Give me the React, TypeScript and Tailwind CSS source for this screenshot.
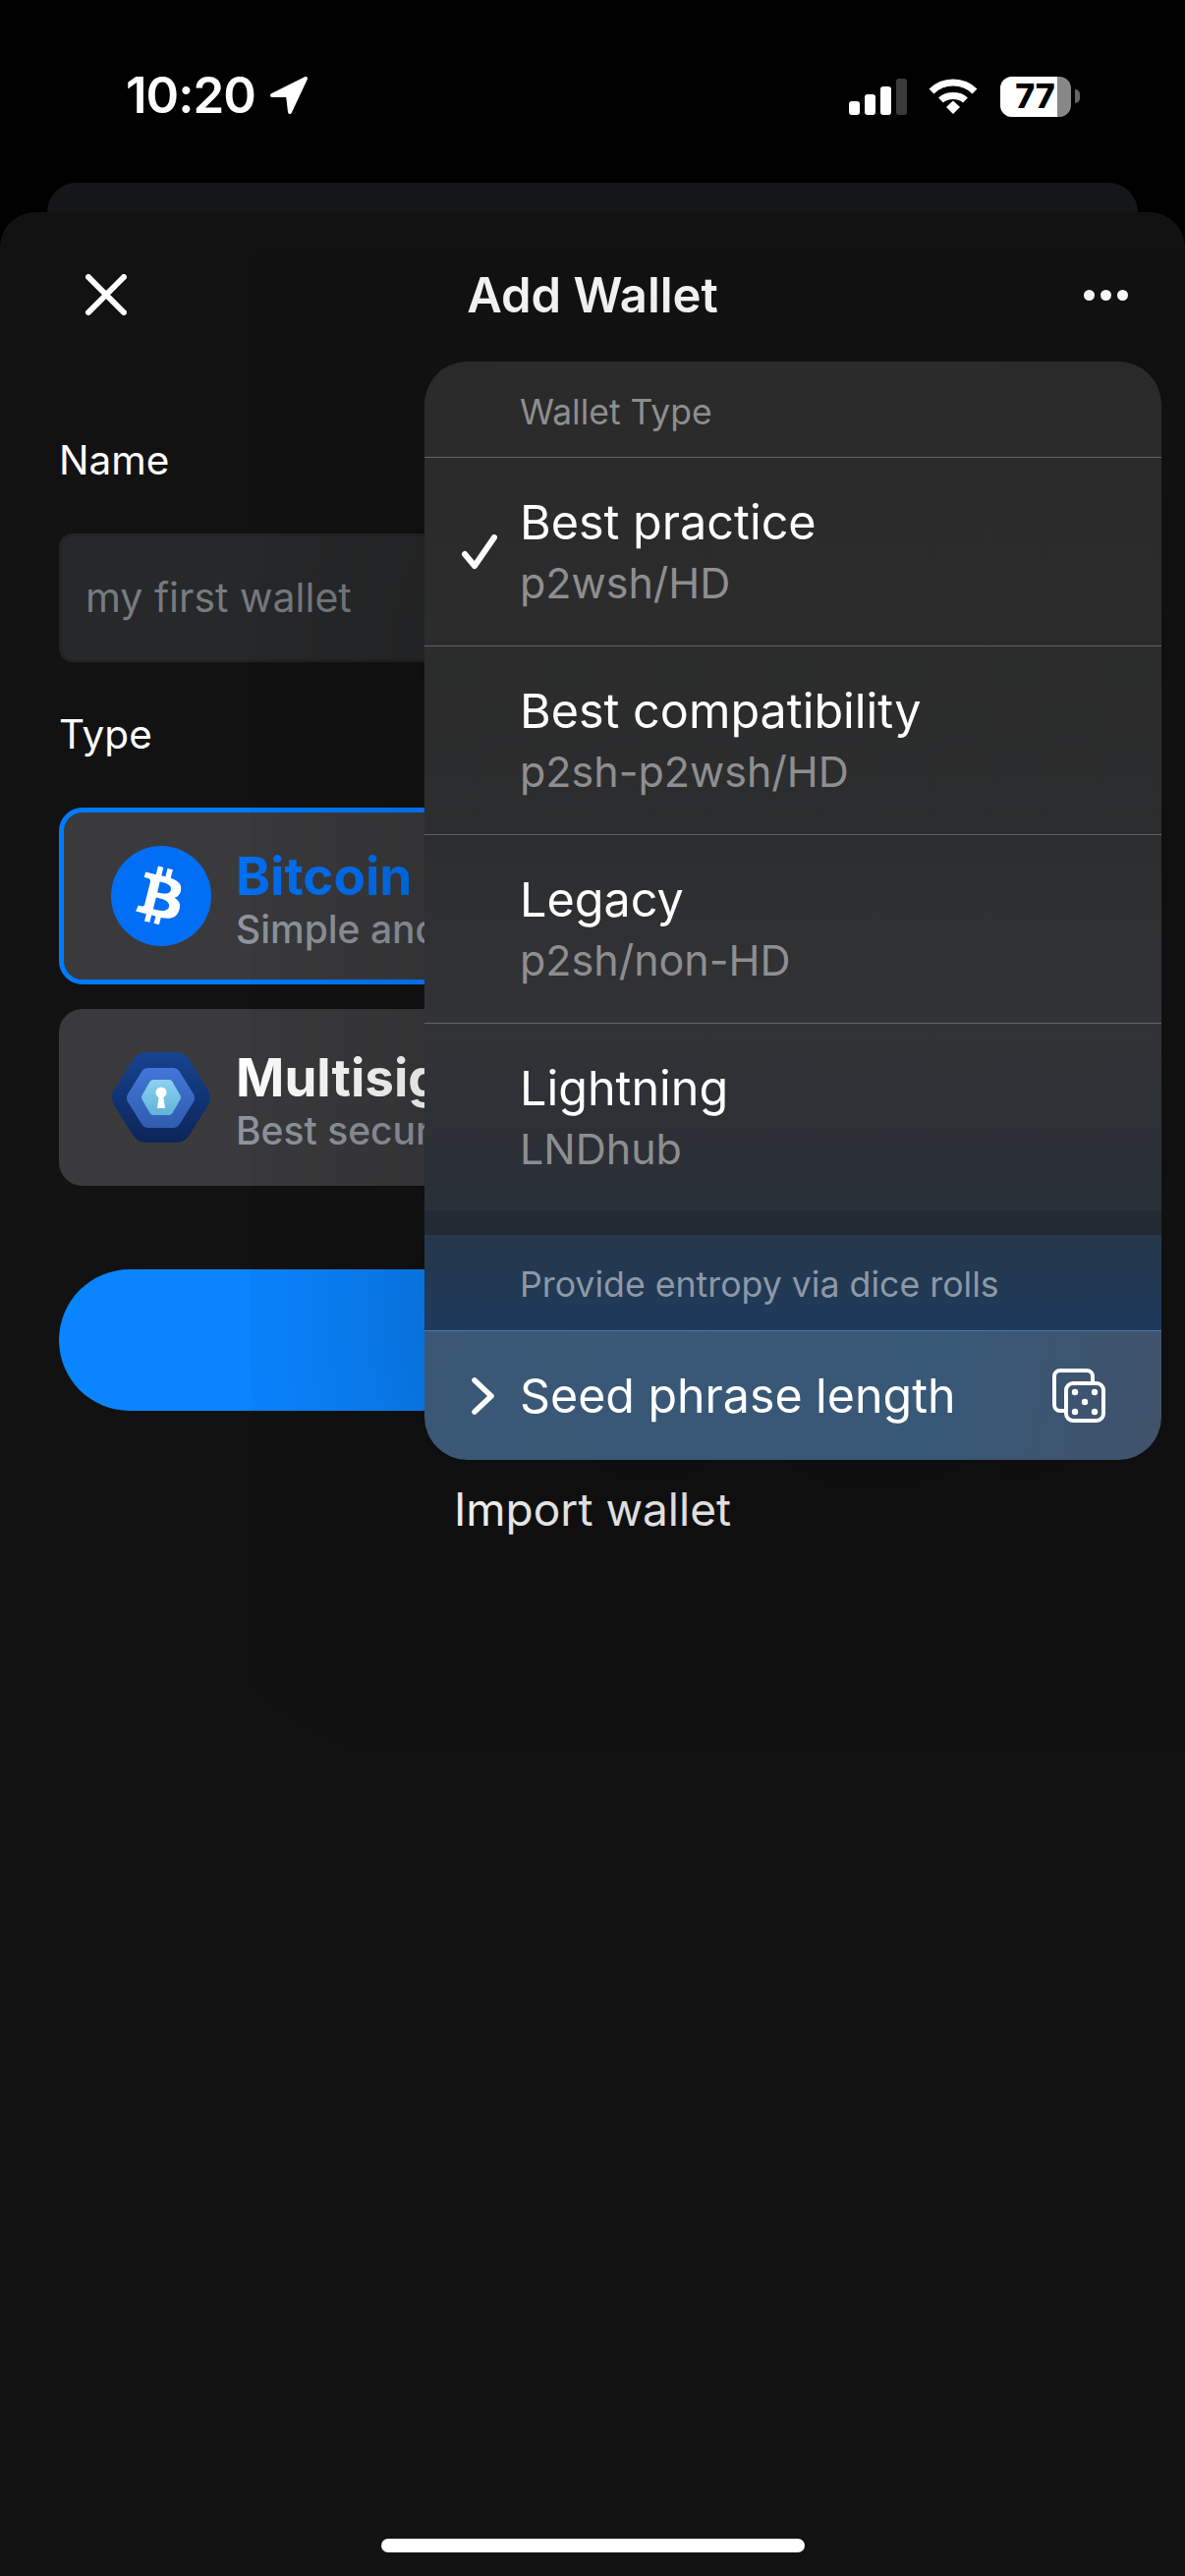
import React from 'react';
import { FaBtc } from 'react-icons/fa';

const walletTypes = [
  { title: 'Best practice', sub: 'p2wsh/HD', checked: true },
  { title: 'Best compatibility', sub: 'p2sh-p2wsh/HD' },
  { title: 'Legacy', sub: 'p2sh/non-HD' },
  { title: 'Lightning', sub: 'LNDhub' },
];

const StatusBar = () => (
  <div className="h-[186px] flex items-start justify-between pt-[72px] pl-[128px] pr-[107px] text-white">
    <div className="flex items-center gap-[14px] h-[50px]">
      <span className="text-[51px] leading-[50px] font-semibold tracking-[-1px]">10:20</span>
      <svg width="40" height="40" viewBox="0 0 40 40" className="fill-white stroke-white">
        <path d="M3 20 L37 3 L21 37 L19 20 Z" strokeWidth="4" strokeLinejoin="round" />
      </svg>
    </div>
    <div className="flex items-center h-[50px] pt-[2px]">
      <div className="flex items-end gap-[5px] h-[37px]">
        <div className="w-[11px] h-[14px] rounded-[3px] bg-white" />
        <div className="w-[11px] h-[21px] rounded-[3px] bg-white" />
        <div className="w-[11px] h-[29px] rounded-[3px] bg-white" />
        <div className="w-[11px] h-[37px] rounded-[3px] bg-[#3a3a3a]" />
      </div>
      <svg width="50" height="37" viewBox="0 0 50 37" className="ml-[22px]" fill="none" stroke="white">
        <path d="M3 13 C15 1 35 1 47 13" strokeWidth="7" />
        <path d="M12.5 22 C19 16 31 16 37.5 22" strokeWidth="7" />
        <path d="M18 29 L25 22.5 L32 29 L25 36 Z" fill="white" strokeWidth="0" />
      </svg>
      <div className="ml-[23px] w-[72px] h-[41px] rounded-[12px] overflow-hidden bg-[#888888] flex">
        <div className="w-[58px] bg-white flex items-center justify-center text-black text-[34px] font-extrabold leading-none pl-[13px]">
          77
        </div>
      </div>
      <div className="ml-[4px] w-[5px] h-[14px] rounded-r-[5px] bg-[#666666]" />
    </div>
  </div>
);

const BitcoinIcon = () => (
  <div className="w-[102px] h-[102px] rounded-full bg-[#006ff5] flex items-center justify-center shrink-0 text-white">
    <FaBtc size={58} className="rotate-[14deg]" />
  </div>
);

const MultisigIcon = () => (
  <svg width="102" height="94" viewBox="0 0 102 94" className="shrink-0">
    <defs>
      <linearGradient id="hexOuter" gradientUnits="userSpaceOnUse" x1="0" y1="1" x2="0" y2="93">
        <stop offset="0" stopColor="#174491" />
        <stop offset="1" stopColor="#0b2458" />
      </linearGradient>
      <linearGradient id="hexMid" gradientUnits="userSpaceOnUse" x1="0" y1="17" x2="0" y2="78">
        <stop offset="0" stopColor="#4276d8" />
        <stop offset="1" stopColor="#2f5cae" />
      </linearGradient>
      <linearGradient id="hexInner" gradientUnits="userSpaceOnUse" x1="0" y1="29" x2="0" y2="65">
        <stop offset="0" stopColor="#8cd2ef" />
        <stop offset="1" stopColor="#60b3db" />
      </linearGradient>
    </defs>
    <polygon points="17,47 36,17 66,17 85,47 66,77 36,77" fill="url(#hexOuter)" stroke="url(#hexOuter)" strokeWidth="32" strokeLinejoin="round" />
    <polygon points="24,47.5 38,25 63,25 77,47.5 63,70 38,70" fill="url(#hexMid)" stroke="url(#hexMid)" strokeWidth="16" strokeLinejoin="round" />
    <polygon points="35,47 43,33 59,33 67,47 59,61 43,61" fill="url(#hexInner)" stroke="url(#hexInner)" strokeWidth="8" strokeLinejoin="round" />
    <circle cx="51" cy="42" r="5.5" fill="white" />
    <path d="M49 44 L53 44 L55 58 L47 58 Z" fill="white" />
  </svg>
);

const WalletCard = ({ icon, title, sub, active }: { icon: React.ReactNode; title: string; sub: string; active?: boolean }) => (
  <div className={`h-[180px] rounded-[24px] bg-[#3a3a3c] flex items-center pl-[48px] border-[5px] ${active ? 'border-[#007aff]' : 'border-[#3a3a3c]'}`}>
    {icon}
    <div className="ml-[25px] flex flex-col">
      <span className={`text-[53px] leading-[68px] font-bold ${active ? 'text-[#0070f3]' : 'text-white'}`}>{title}</span>
      <span className="text-[39px] leading-[40px] font-medium text-[#8f959e]">{sub}</span>
    </div>
  </div>
);

const AddWalletMenu = () => (
  <div className="absolute top-[368px] left-[432px] w-[750px] h-[1118px] rounded-[44px] overflow-hidden flex flex-col shadow-[0_60px_260px_rgba(0,0,0,0.35)]">
    <div className="h-[865px] flex flex-col bg-[linear-gradient(to_bottom,#2a2a2a_0%,#2c2d2e_55%,#323336_78%,#2c3036_92%,#293038_100%)]">
      <div className="h-[97px] flex items-center pl-[97px] pt-[6px] text-[35.5px] text-[#8e8e90]">Wallet Type</div>
      {walletTypes.map(item => (
        <div key={item.title} className="h-[192px] border-t border-[#636365] flex items-center">
          <div className="w-[97px] flex pl-[38px] shrink-0">
            {item.checked && (
              <svg width="36" height="36" viewBox="0 0 36 36" fill="none" stroke="white" strokeWidth="6" strokeLinecap="round" strokeLinejoin="round">
                <path d="M3 20 L13 32 L33 3" />
              </svg>
            )}
          </div>
          <div className="flex flex-col">
            <span className="text-[48.5px] leading-[63px] text-white">{item.title}</span>
            <span className="text-[43px] leading-[60px] text-[#8e8e90]">{item.sub}</span>
          </div>
        </div>
      ))}
    </div>
    <div className="h-[24px] bg-[#222a33]" />
    <div className="h-[97px] flex items-center pl-[97px] pt-[4px] text-[35.7px] text-[#8e98a6] bg-[linear-gradient(to_bottom,#26384a,#1e3a5c)]">
      Provide entropy via dice rolls
    </div>
    <div className="flex-1 border-t border-[#4f78a8] flex items-center bg-[linear-gradient(100deg,#3a5876_0%,#385877_70%,#40526a_100%)]">
      <div className="w-[97px] flex pl-[47px] shrink-0">
        <svg width="26" height="38" viewBox="0 0 26 38" fill="none" stroke="white" strokeWidth="5.5" strokeLinecap="round" strokeLinejoin="round">
          <path d="M4 3 L21 19 L4 35" />
        </svg>
      </div>
      <span className="text-[48.3px] leading-[62px] text-white">Seed phrase length</span>
      <svg width="54" height="55" viewBox="0 0 54 55" className="ml-auto mr-[57px]" fill="none" stroke="white" strokeWidth="4">
        <path d="M13 43 H8 A6 6 0 0 1 2 37 V8 A6 6 0 0 1 8 2 H35 A6 6 0 0 1 41 8 V13" />
        <rect x="14" y="15" width="38" height="38" rx="7" />
        <g fill="white" stroke="none">
          <circle cx="23" cy="24" r="3.2" />
          <circle cx="43" cy="24" r="3.2" />
          <circle cx="33" cy="34" r="3.2" />
          <circle cx="23" cy="44" r="3.2" />
          <circle cx="43" cy="44" r="3.2" />
        </g>
      </svg>
    </div>
  </div>
);

export default function App() {
  return (
    <div className="relative w-[1206px] h-[2622px] bg-black flex flex-col overflow-hidden font-['Inter',sans-serif]">
      <StatusBar />
      <div className="mx-[48px] h-[30px] rounded-t-[30px] bg-[#141617]" />
      <div className="flex-1 rounded-t-[36px] bg-[#121212] flex flex-col">
        <div className="h-[168px] grid grid-cols-[1fr_auto_1fr] items-center px-[58px]">
          <svg width="42" height="42" viewBox="0 0 42 42" stroke="white" strokeWidth="6" strokeLinecap="round" className="ml-[29px]">
            <path d="M3 3 L39 39 M39 3 L3 39" />
          </svg>
          <h1 className="text-[49px] leading-none font-semibold text-[#f8f8f8]">Add Wallet</h1>
          <div className="flex justify-end gap-[6px]">
            <div className="w-[11px] h-[11px] rounded-full bg-white" />
            <div className="w-[11px] h-[11px] rounded-full bg-white" />
            <div className="w-[11px] h-[11px] rounded-full bg-white" />
          </div>
        </div>

        <div className="px-[60px] flex flex-col">
          <label className="mt-[61px] h-[48px] flex items-center text-[40.5px] text-white">Name</label>
          <div className="mt-[50px] h-[131px] rounded-[14px] border-[3px] border-[#232323] bg-[#272829] flex items-center pl-[24px] pt-[1px] text-[41px] text-[#767b82]">
            my first wallet
          </div>
          <label className="mt-[50px] h-[48px] flex items-center text-[40.5px] text-white">Type</label>
          <div className="mt-[50px] flex flex-col gap-[25px]">
            <WalletCard active icon={<BitcoinIcon />} title="Bitcoin" sub="Simple and powerful" />
            <WalletCard icon={<MultisigIcon />} title="Multisig Vault" sub="Best security" />
          </div>
          <div className="mt-[85px] h-[144px] rounded-[72px] bg-[#0a84ff]" />
          <div className="mt-[70px] h-[60px] flex items-center justify-center text-[46px] text-white">Import wallet</div>
        </div>

        <div className="mt-auto mb-[24px] mx-auto w-[431px] h-[14px] rounded-full bg-white" />
      </div>
      <AddWalletMenu />
    </div>
  );
}
